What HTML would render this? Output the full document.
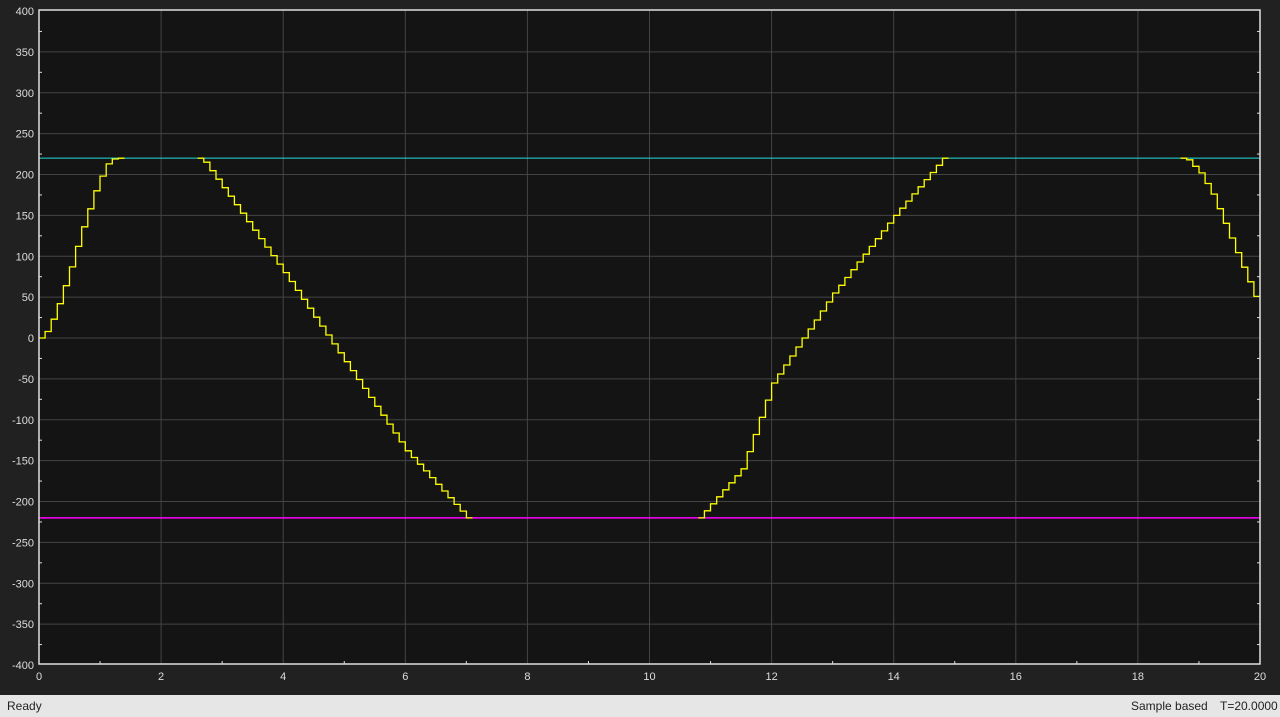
<!DOCTYPE html>
<html><head><meta charset="utf-8"><style>
html,body{margin:0;padding:0;width:1280px;height:717px;overflow:hidden;background:#212121;font-family:"Liberation Sans",sans-serif}
#bar{position:absolute;left:0;top:695px;width:1280px;height:22px;background:#e6e6e6;color:#222;font-size:12px}
#bar span{position:absolute;top:4px}
</style></head><body>
<svg id="s" width="1280" height="695" style="position:absolute;left:0;top:0"></svg>
<div id="bar"><span style="left:7px">Ready</span><span style="left:1131px">Sample based</span><span style="left:1220px">T=20.0000</span></div>
<script>
const L=39,R=1260,T=10,B=664;
const X=t=>L+t*(R-L)/20, Y=v=>338-v*(B-T)/800;
let h='<rect x="'+L+'" y="'+T+'" width="'+(R-L)+'" height="'+(B-T)+'" fill="#141414"/>';
for(let v=-350;v<=350;v+=50)h+='<line x1="'+L+'" x2="'+R+'" y1="'+Y(v)+'" y2="'+Y(v)+'" stroke="#444" stroke-width="1"/>';
for(let t=2;t<20;t+=2)h+='<line y1="'+T+'" y2="'+B+'" x1="'+X(t)+'" x2="'+X(t)+'" stroke="#444" stroke-width="1"/>';
for(let v=-400;v<=400;v+=50){h+='<text x="34" y="'+(Y(v)+4)+'" fill="#ddd" font-size="11" text-anchor="end">'+v+'</text>';}
for(let v=-375;v<400;v+=50){h+='<line x1="'+L+'" x2="'+(L+3)+'" y1="'+Y(v)+'" y2="'+Y(v)+'" stroke="#ddd"/><line x1="'+R+'" x2="'+(R-3)+'" y1="'+Y(v)+'" y2="'+Y(v)+'" stroke="#ddd"/>';}
for(let t=0;t<=20;t+=2)h+='<text x="'+X(t)+'" y="680" fill="#ddd" font-size="11" text-anchor="middle">'+t+'</text>';
for(let t=1;t<20;t+=2)h+='<line y1="'+B+'" y2="'+(B-3)+'" x1="'+X(t)+'" x2="'+X(t)+'" stroke="#ddd"/>';
h+='<line x1="'+L+'" x2="'+R+'" y1="'+Y(220)+'" y2="'+Y(220)+'" stroke="#22dddd" stroke-width="1"/>';
h+='<line x1="'+L+'" x2="'+R+'" y1="'+Y(-220)+'" y2="'+Y(-220)+'" stroke="#ff00ff" stroke-width="1.5"/>';
const k=[[0,0],[0.1,8],[0.2,23],[0.3,42],[0.4,64],[0.5,87],[0.6,112],[0.7,136],[0.8,158],[0.9,180],[1.0,198],[1.1,213],[1.2,219],[1.3,220],[2.6,220],[2.7,215],[4,80],[6,-138],[7.0,-220],[10.8,-220],[11.5,-160],[12,-55],[13,55],[14,150],[14.8,220],[18.7,220],[18.8,218],[19.0,202],[19.2,176],[20,33]];
function f(t){for(let i=1;i<k.length;i++)if(t<=k[i][0]+1e-9){const a=k[i-1],b=k[i];return a[1]+(b[1]-a[1])*(t-a[0])/(b[0]-a[0]);}return 33;}
const sat=v=>Math.abs(v)>=219.9;
let p='';let pen=false;
for(let i=0;i<200;i++){const t=i/10,v=f(t),vp=i>0?f(t-0.1):0,vn=f(t+0.1);
 if(sat(v)&&sat(vp)&&sat(vn)){pen=false;continue;}
 if(!pen){p+=' M'+X(t).toFixed(1)+' '+Y(v).toFixed(1);pen=true;}else p+=' L'+X(t).toFixed(1)+' '+Y(v).toFixed(1);
 p+=' L'+X(t+0.1).toFixed(1)+' '+Y(v).toFixed(1);}
h+='<path d="'+p+'" fill="none" stroke="#ffff00" stroke-width="1.3"/>';
h+='<rect x="'+L+'" y="'+T+'" width="'+(R-L)+'" height="'+(B-T)+'" fill="none" stroke="#e0e0e0" stroke-width="1.5"/>';
document.getElementById('s').innerHTML=h;
</script>
</body></html>
